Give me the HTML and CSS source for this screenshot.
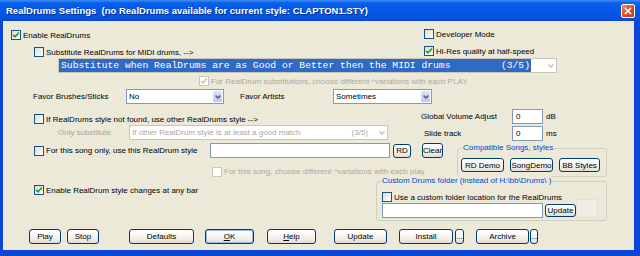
FILE: index.html
```html
<!doctype html>
<html lang="en">
<head>
<meta charset="utf-8">
<meta name="viewport" content="width=device-width, initial-scale=1">
<title>RealDrums Settings</title>
<link rel="stylesheet" href="styles.css">
</head>
<body>
<div class="window">

<div class="titlebar">
  <span class="title">RealDrums Settings&nbsp; (no RealDrums available for current style: CLAPTON1.STY)</span>
  <span class="close"><svg viewBox="0 0 14 14"><path d="M4 4l6 6M10 4l-6 6" stroke="#fff" stroke-width="1.8" stroke-linecap="square"/></svg></span>
</div>

<div class="client">

  <!-- top checkboxes -->
  <div class="band band-a">
    <div class="col w421">
      <label class="chk r-enable"><i class="box"><svg viewBox="0 0 8 8"><path d="M1 3.8l2 2 4-4.3" class="tick"/></svg></i>Enable RealDrums</label>
      <label class="chk r-subst"><i class="box"></i>Substitute RealDrums for MIDI drums, --&gt;</label>
    </div>
    <div class="col">
      <label class="chk r-dev"><i class="box"></i>Developer Mode</label>
      <label class="chk r-hires"><i class="box"><svg viewBox="0 0 8 8"><path d="M1 3.8l2 2 4-4.3" class="tick"/></svg></i>Hi-Res quality at half-speed</label>
    </div>
  </div>

  <div class="band band-b">
    <div class="combo sel">
      <span class="val"><span>Substitute when RealDrums are as Good or Better then the MIDI drums</span><span>(3/5)</span></span>
      <span class="arr dis"><svg viewBox="0 0 8 6"><path d="M1.5 1.5l2.5 2.5 2.5-2.5" class="chev"/></svg></span>
    </div>
  </div>

  <div class="band band-c">
    <label class="chk off"><i class="box"><svg viewBox="0 0 8 8"><path d="M1 3.8l2 2 4-4.3" class="tick"/></svg></i>For RealDrum substitutions, choose different ^variations with each PLAY</label>
  </div>

  <div class="band band-d">
    <span class="lbl fav1">Favor Brushes/Sticks</span>
    <div class="combo w98">
      <span class="val">No</span>
      <span class="arr"><svg viewBox="0 0 8 6"><path d="M1.5 1.5l2.5 2.5 2.5-2.5" class="chev"/></svg></span>
    </div>
    <span class="lbl fav2">Favor Artists</span>
    <div class="combo w99">
      <span class="val">Sometimes</span>
      <span class="arr"><svg viewBox="0 0 8 6"><path d="M1.5 1.5l2.5 2.5 2.5-2.5" class="chev"/></svg></span>
    </div>
  </div>

  <!-- fallback style + volume -->
  <div class="band band-e">
    <div class="col w418">
      <label class="chk r-other"><i class="box"></i>If RealDrums style not found, use other RealDrums style --&gt;</label>
      <div class="row">
        <span class="lbl only">Only substitute</span>
        <div class="combo dis w259">
          <span class="val"><span>If other RealDrum style is at least a good match</span><span>(3/5)</span></span>
          <span class="arr dis"><svg viewBox="0 0 8 6"><path d="M1.5 1.5l2.5 2.5 2.5-2.5" class="chev"/></svg></span>
        </div>
      </div>
    </div>
    <div class="col">
      <div class="row">
        <span class="lbl vol">Global Volume Adjust</span>
        <span class="edit w31">0</span>
        <span class="unit">dB</span>
      </div>
      <div class="row r-slide">
        <span class="lbl slide">Slide track</span>
        <span class="edit w31">0</span>
        <span class="unit">ms</span>
      </div>
    </div>
  </div>

  <!-- song style -->
  <div class="band band-f">
    <div class="col w454">
      <div class="row">
        <label class="chk song"><i class="box"></i>For this song only, use this RealDrum style</label>
        <span class="edit w180"></span>
        <span class="btn b-rd">RD</span>
        <span class="btn b-clear">Clear</span>
      </div>
      <label class="chk off r-songvar"><i class="box"></i>For this song, choose different ^variations with each play</label>
    </div>
    <div class="group g-compat">
      <span class="legend">Compatible Songs, styles</span>
      <div class="row r-demo">
        <span class="btn w43">RD Demo</span>
        <span class="btn w43">SongDemo</span>
        <span class="btn w41">BB Styles</span>
      </div>
    </div>
  </div>

  <!-- style changes + custom folder -->
  <div class="band band-g">
    <div class="col w373">
      <label class="chk r-bar"><i class="box"><svg viewBox="0 0 8 8"><path d="M1 3.8l2 2 4-4.3" class="tick"/></svg></i>Enable RealDrum style changes at any bar</label>
    </div>
    <div class="group g-folder">
      <span class="legend">Custom Drums folder (instead of H:\bb\Drums\ )</span>
      <label class="chk r-custom"><i class="box"></i>Use a custom folder location for the RealDrums</label>
      <div class="row r-path">
        <span class="edit w161"></span>
        <span class="btn b-upd">Update</span>
        <span class="blank"></span>
      </div>
    </div>
  </div>

  <!-- bottom buttons -->
  <div class="band band-h">
    <span class="btn b-play">Play</span>
    <span class="btn b-stop">Stop</span>
    <span class="btn b-def">Defaults</span>
    <span class="btn b-ok"><span><u>O</u>K</span></span>
    <span class="btn b-help"><span><u>H</u>elp</span></span>
    <span class="btn b-update">Update</span>
    <span class="btn b-install">Install</span>
    <span class="btn b-more">...</span>
    <span class="btn b-archive">Archive</span>
    <span class="btn b-more2">...</span>
  </div>

</div>
</div>
</body>
</html>
```

FILE: styles.css
```css
body { margin:0; background:#fff; font-family:"Liberation Sans", Arial, sans-serif; font-size:8px; color:#000 }
.window { width:640px; height:256px; background:#0b46d6; display:flex; flex-direction:column }

/* title bar */
.titlebar { height:21px; flex:none; display:flex; align-items:center; padding-left:6px;
  background:linear-gradient(#3d8ef7 0%, #0a5fe9 14%, #0058e6 50%, #0553e0 85%, #0846d2 100%) }
.title { color:#fff; font-weight:bold; font-size:9.5px; white-space:nowrap; text-shadow:1px 1px 0 #0a2c8a }
.close { margin-left:auto; margin-right:5px; width:14px; height:14px; box-sizing:border-box; border:1px solid #fff; border-radius:2px;
  background:linear-gradient(135deg, #f08a62, #e1461c 55%, #c73a12); display:flex }
.close svg { width:12px; height:12px }

/* dialog client area */
.client { height:229px; margin:0 6px 0 3px; background:#ece9d8; display:flex; flex-direction:column }
.band { display:flex; flex:none }
.col { display:flex; flex-direction:column; flex:none }
.row { display:flex; align-items:center }
.lbl { white-space:nowrap; flex:none }
.unit { margin-left:3px }

.w421 { width:421px }
.w418 { width:418px }
.w454 { width:454px }
.w373 { width:373px }

/* checkboxes */
.chk { display:flex; align-items:center; height:12px; white-space:nowrap }
.box { width:10px; height:10px; box-sizing:border-box; border:1px solid #1c5180; margin-right:2px; flex:none;
  background:linear-gradient(135deg, #dcdcd7, #fff); display:flex; align-items:center; justify-content:center }
.box svg { width:8px; height:8px }
.tick { fill:none; stroke:#21a121; stroke-width:1.7 }
.chk.off { color:#aca899 }
.chk.off .box { border-color:#cac8bb; background:#fff }
.chk.off .tick { stroke:#cac8bb }

/* combos and edits */
.combo { box-sizing:border-box; height:15px; border:1px solid #7f9db9; background:#fff; display:flex; align-items:center; flex:none }
.combo .val { flex:1; padding-left:2px; display:flex; justify-content:space-between; white-space:nowrap; overflow:hidden }
.arr { width:11px; height:13px; flex:none; box-sizing:border-box; border:1px solid #fff; border-radius:2px;
  background:linear-gradient(#dce6fd, #b9cdf8); display:flex; align-items:center; justify-content:center }
.arr svg { width:8px; height:6px }
.chev { fill:none; stroke:#4d6185; stroke-width:1.6 }
.arr.dis { background:#fff; border-color:#fff }
.arr.dis .chev { stroke:#c9c7ba }
.combo.dis { border-color:#c9c7ba; color:#aca899 }
.combo.dis .val { padding-right:8px }
.combo.sel { width:499px; margin-left:55px; border-color:#c9c7ba; height:15px }
.combo.sel .val { background:#316ac5; color:#fff; font-family:"Liberation Mono", "Courier New", monospace; font-size:9.7px;
  height:13px; align-items:center; padding:0 1px 0 2px; margin-right:14px }
.w98 { width:98px }
.w99 { width:99px }
.w259 { width:259px }

.edit { box-sizing:border-box; height:15px; border:1px solid #7f9db9; background:#fff; padding-left:3px; display:flex; align-items:center; flex:none }
.w31 { width:31px }
.w180 { width:180px }
.w161 { width:161px }

/* buttons */
.btn { box-sizing:border-box; height:15px; border:1px solid #003c74; border-radius:3px; flex:none; white-space:nowrap;
  background:linear-gradient(#fff, #f4f3ee 55%, #e2ded2); display:flex; align-items:center; justify-content:center }
.w43 { width:43px }
.w41 { width:41px }

/* group boxes */
.group { box-sizing:border-box; border:1px solid #d0d0bf; border-radius:3px; flex:none; display:flex; flex-direction:column }
.legend { color:#0046d5; background:#ece9d8; margin:-7px 0 0 4px; padding:0 1px; width:max-content; line-height:12px; white-space:nowrap }

/* band a */
.band-a { margin-top:7px; height:30px }
.r-enable { margin:1px 0 0 8px }
.r-subst { margin:5px 0 0 31px }
.r-hires { margin-top:5px }

/* band b-d */
.band-c { margin:2px 0 0 196px }
.band-d { margin-top:2px; align-items:center }
.fav1 { margin-left:30px; width:93px }
.fav2 { margin-left:16px; width:93px }

/* band e */
.band-e { margin-top:5px; height:34px }
.r-other { margin:4px 0 0 31px }
.only { margin-left:55px; width:71px; color:#aca899 }
.vol { width:91px }
.slide { margin-left:3px; width:88px }
.r-slide { margin-top:2px }

/* band f */
.band-f { height:34px }
.song { margin-left:31px; width:176px }
.b-rd { margin-left:3px; width:18px; height:14px }
.b-clear { margin-left:11px; width:21px }
.r-songvar { margin:8px 0 0 209px }
.g-compat { width:150px; height:29px; margin-top:5px }
.r-demo { margin:4px 0 0 3px; gap:6px }
.r-demo .btn { height:14px }

/* band g */
.band-g { margin-top:4px; height:40px }
.r-bar { margin:3px 0 0 31px }
.g-folder { width:231px; height:40px }
.r-custom { margin:4px 0 0 5px }
.r-path { margin-left:5px; align-items:flex-end }
.b-upd { margin:0 0 1px 2px; width:31px; height:13px }
.blank { width:22px; height:19px; margin-top:-5px; box-sizing:border-box; border:1px solid #e4e1d3; background:#efede3 }

/* band h */
.band-h { margin-top:8px }
.b-play { margin-left:26px; width:32px }
.b-stop { margin-left:6px; width:32px }
.b-def { margin-left:30px; width:65px }
.b-ok { margin-left:11px; width:49px; box-shadow:inset 0 0 0 1px #9db9eb }
.b-help { margin-left:13px; width:49px }
.b-update { margin-left:18px; width:53px }
.b-install { margin-left:12px; width:54px }
.b-more { margin-left:2px; width:9px }
.b-archive { margin-left:12px; width:53px }
.b-more2 { margin-left:1px; width:8px }
```
